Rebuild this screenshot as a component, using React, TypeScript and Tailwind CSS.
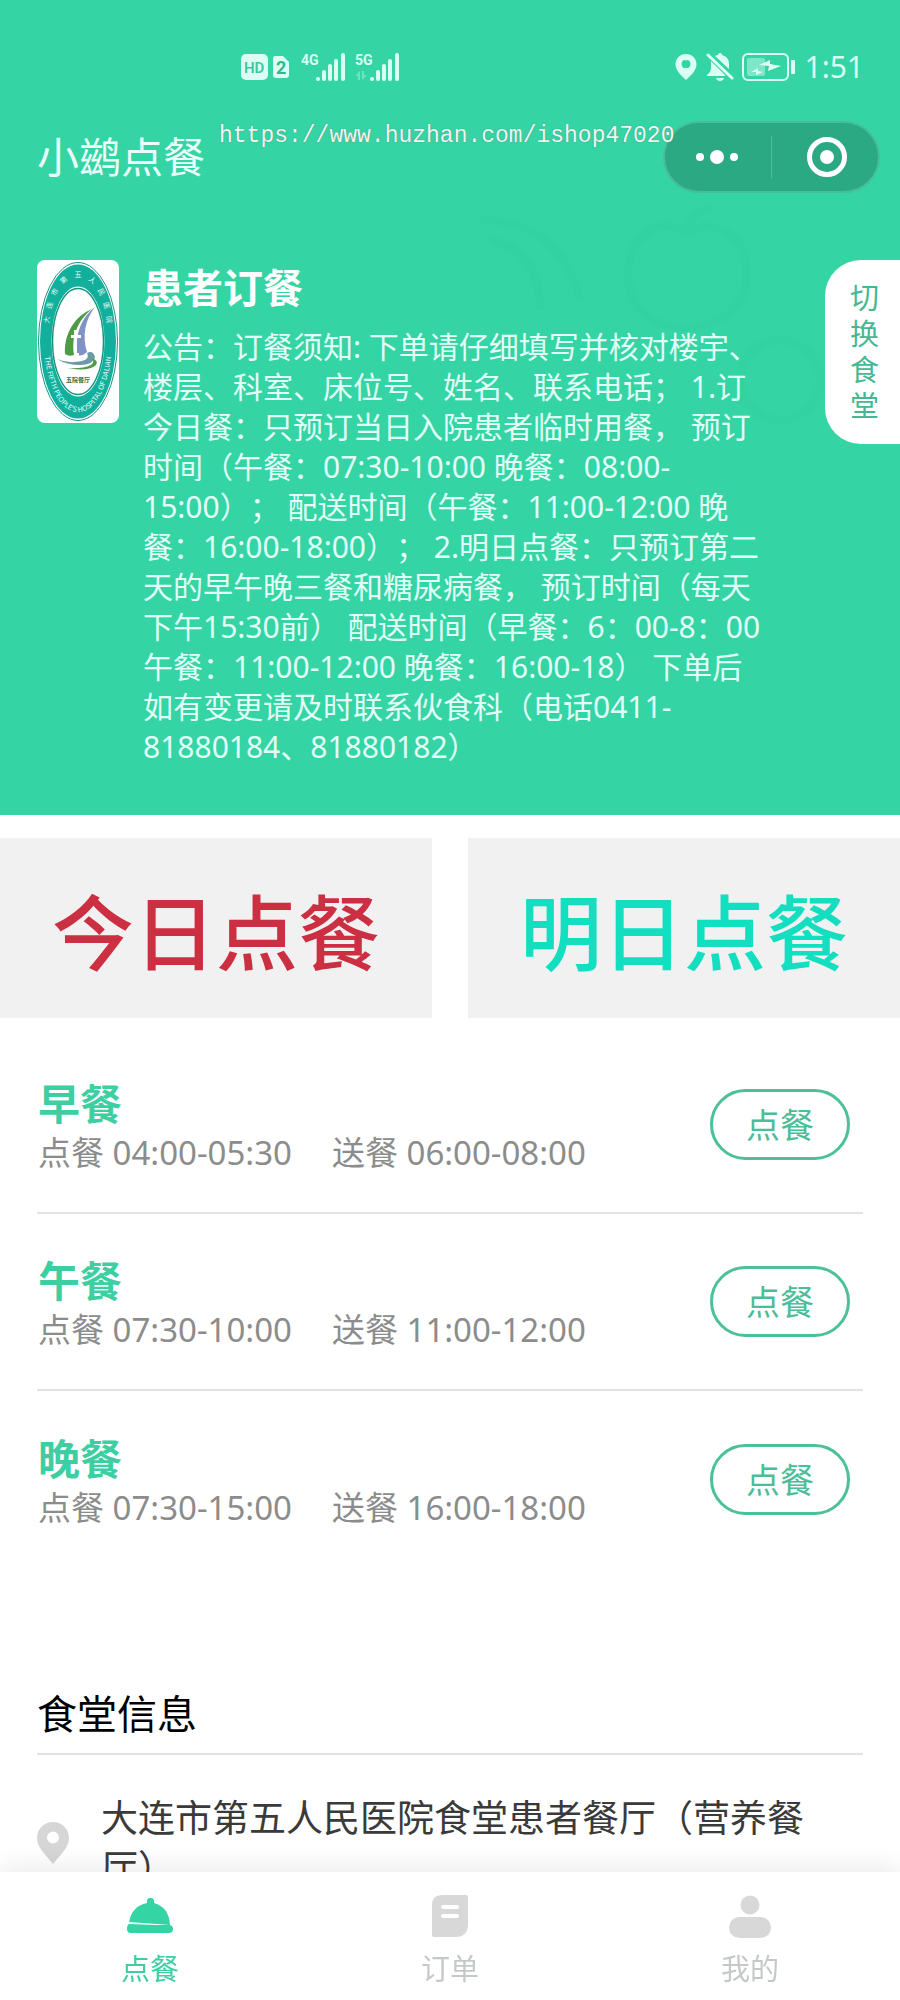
interface Meal {
  name: string;
  order: string;
  delivery: string;
}

const meals: Meal[] = [
  { name: "早餐", order: "04:00-05:30", delivery: "06:00-08:00" },
  { name: "午餐", order: "07:30-10:00", delivery: "11:00-12:00" },
  { name: "晚餐", order: "07:30-15:00", delivery: "16:00-18:00" },
];

const notice = `公告：订餐须知: 下单请仔细填写并核对楼宇、
楼层、科室、床位号、姓名、联系电话； 1.订
今日餐：只预订当日入院患者临时用餐， 预订
时间（午餐：07:30-10:00 晚餐：08:00-
15:00）； 配送时间（午餐：11:00-12:00 晚
餐：16:00-18:00）； 2.明日点餐：只预订第二
天的早午晚三餐和糖尿病餐， 预订时间（每天
下午15:30前） 配送时间（早餐：6：00-8：00
午餐：11:00-12:00 晚餐：16:00-18） 下单后
如有变更请及时联系伙食科（电话0411-
81880184、81880182）`;

const SignalIcon = ({ label }: { label: string }) => (
  <svg width="46" height="30" viewBox="0 0 46 30" fill="#dcfff4">
    <text x="0" y="13" fontSize="14" fontWeight="700" className="font-['Roboto',sans-serif]">
      {label}
    </text>
    {label === "5G" && (
      <path d="M0 24l5-5v9h-2v-4zM7 19h2v4h3l-5 5z" opacity="0.35" />
    )}
    <circle cx="17" cy="27" r="2" />
    <rect x="21" y="18" width="4" height="11" rx="2" />
    <rect x="27" y="12" width="4" height="17" rx="2" />
    <rect x="33" y="7" width="4" height="22" rx="2" />
    <rect x="40" y="1" width="4" height="28" rx="2" />
  </svg>
);

const StatusBar = () => (
  <div className="flex h-10 items-center justify-between pl-[241px] pr-[36px]">
    <div className="flex items-center">
      <svg width="48" height="28" viewBox="0 0 48 28">
        <rect x="0" y="1" width="27" height="26" rx="5" fill="#dcfff4" />
        <text x="3" y="20" fontSize="15" fontWeight="600" fill="#3fc79f" className="font-['Roboto',sans-serif]">
          HD
        </text>
        <path d="M34 3h8l6 6v13q0 3-3 3H35q-3 0-3-3V6q0-3 2-3z" fill="#dcfff4" />
        <text x="35" y="21" fontSize="18" fontWeight="700" fill="#2fb78e" className="font-['Roboto',sans-serif]">
          2
        </text>
      </svg>
      <div className="ml-3 flex gap-2">
        <SignalIcon label="4G" />
        <SignalIcon label="5G" />
      </div>
    </div>

    <div className="flex items-center gap-2 text-[30px] leading-10 text-[#dcfff4]">
      <svg width="24" height="28" viewBox="0 0 24 28" fill="currentColor">
        <path
          fillRule="evenodd"
          d="M12 1C6 1 1.500 5.500 1.500 11.500C1.500 18 8 23 12 27C16 23 22.500 18 22.500 11.500C22.500 5.500 18 1 12 1zM12 7.500a3 4 0 1 1 0 7a3 4 0 1 1 0-7z"
        />
      </svg>
      <svg width="28" height="30" viewBox="0 0 28 30" fill="currentColor">
        <path d="M9 4q2-1 3-1q0-2 2-2t2 2q7 2 7 9v5L9 4zM5 9l15 15H1q0-2 1-2q3-2 3-7z" />
        <path d="M10 26h8q-1 3-4 3t-4-3z" />
        <path d="M2 3l24 23" stroke="currentColor" strokeWidth="3" strokeLinecap="round" />
      </svg>
      <svg width="54" height="28" viewBox="0 0 54 28" fill="currentColor">
        <rect x="1" y="1" width="45" height="26" rx="5" fill="none" stroke="currentColor" strokeWidth="2" />
        <rect x="5" y="5" width="18" height="18" rx="2" opacity="0.45" />
        <path d="M17 12l11-5v4l11 2l-13 5l1-5zM9 19l7-4v3l5 1l-7 3v-3z" />
        <rect x="49" y="7" width="4" height="14" rx="1" />
      </svg>
      <span>1:51</span>
    </div>
  </div>
);

const Capsule = () => (
  <div className="flex h-[72px] w-[217px] items-center rounded-full border-2 border-[#48bd99] bg-[#2aa982]">
    <button aria-label="更多" className="flex h-full flex-1 items-center justify-center">
      <svg width="44" height="16" viewBox="0 0 44 16" fill="#fff">
        <circle cx="4" cy="8" r="4" />
        <circle cx="21" cy="8" r="7" />
        <circle cx="38" cy="8" r="4" />
      </svg>
    </button>
    <span className="h-[42px] w-px bg-[#4bbf9b]" />
    <button aria-label="关闭" className="flex h-full flex-1 items-center justify-center">
      <svg width="44" height="42" viewBox="0 0 44 42" fill="none">
        <circle cx="24" cy="21" r="17.500" stroke="#fff" strokeWidth="5" />
        <circle cx="24" cy="21" r="7" fill="#fff" />
      </svg>
    </button>
  </div>
);

const HospitalLogo = () => (
  <svg
    width="82"
    height="163"
    viewBox="0 0 82 163"
    className="h-[163px] w-[82px] shrink-0 rounded-lg bg-white"
  >
    <ellipse cx="41" cy="81.500" rx="39.500" ry="79" fill="#fff" stroke="#16967f" strokeWidth="1" />
    <ellipse cx="41" cy="81.500" rx="38" ry="77" fill="#12b09c" />
    <ellipse cx="41" cy="81.500" rx="26.500" ry="55" fill="#fff" />
    <ellipse cx="41" cy="81.500" rx="25.500" ry="53" fill="#fff" stroke="#16967f" strokeWidth="1.500" />
    <path id="ring-top" d="M11 72C13 37 25 17 41 17C57 17 69 37 71 72" fill="none" />
    <path id="ring-bottom" d="M6 78C8 121 21 152 41 152C61 152 74 121 76 78" fill="none" />
    <g className="font-['Noto_Sans_CJK_SC',sans-serif]" fill="#e9fffb">
      <text fontSize="7">
        <textPath href="#ring-top" startOffset="50%" textAnchor="middle">
          大　连　市　第　五　人　民　医　院
        </textPath>
      </text>
      <text fontSize="7">
        <textPath href="#ring-bottom" startOffset="50%" textAnchor="middle">
          THE FIFTH PEOPLE'S HOSPITAL OF DALIAN
        </textPath>
      </text>
    </g>
    <path d="M55 49C38 56 27 73 28 94Q32 97 37 95C34 76 41 60 55 49z" fill="#4f9a45" />
    <path d="M58 47C44 58 38 73 40 95Q45 97 50 92C45 76 48 60 58 47z" fill="#7f93c4" />
    <path d="M37 70h3v5h4v3h-4v15h2v3q-5 1-5-4V78h-3v-3h3z" fill="#fff" />
    <path d="M20 99Q31 104 45 101Q53 99 50 93Q56 90 58 97Q57 104 44 105Q29 105 20 99z" fill="#6c9aa8" />
    <path d="M29 108Q46 109 54 105Q58 102 55 98Q62 101 59 105Q52 112 29 108z" fill="#4f9a45" />
    <text
      x="41"
      y="122"
      fontSize="6"
      fontWeight="700"
      textAnchor="middle"
      fill="#3f6e2a"
      className="font-['Noto_Sans_CJK_SC',sans-serif]"
    >
      五院餐厅
    </text>
  </svg>
);

const Header = () => (
  <header className="relative bg-[#34d4a4] pb-12 pt-[47px]">
    {/* faint fruit pattern behind the notice */}
    <svg
      className="pointer-events-none absolute right-0 top-[200px]"
      width="520"
      height="240"
      viewBox="0 0 520 240"
      fill="none"
      stroke="#2fcb9b"
      strokeWidth="8"
      opacity="0.15"
    >
      <path d="M100 20Q180 20 200 100M110 40Q160 50 160 110" />
      <path d="M307 32C270 10 240 50 250 90C260 140 350 140 365 90C375 40 340 15 307 32zM307 30q5-20 25-22" />
      <circle cx="400" cy="180" r="40" />
    </svg>

    <div className="relative">
      <StatusBar />

      <div className="mt-[34px] flex h-[72px] items-center justify-between pl-[37px] pr-[20px]">
        <h1 className="text-[42px] leading-[60px] text-[#eafff9]">小鹚点餐</h1>
        <Capsule />
      </div>

      <div className="mt-[67px] flex items-start pl-[37px]">
        <HospitalLogo />
        <div className="ml-6 flex-1">
          <h2 className="text-[40px] font-bold leading-[56px] text-white">患者订餐</h2>
          <p className="mt-[11px] whitespace-pre-line text-[30px] leading-10 text-[#e2fff7] [text-spacing-trim:space-all]">
            {notice}
          </p>
        </div>
        <button className="flex w-[75px] flex-col items-center rounded-l-[36px] bg-white py-[20px] pl-1 text-[29px] leading-9 text-[#45b893]">
          <span className="w-[29px] break-all">切换食堂</span>
        </button>
      </div>
    </div>

    <span className="absolute left-[219px] top-[121px] font-['Liberation_Mono',monospace] text-[23px] leading-[30px] text-[#eef7f4] [text-shadow:0_0_1px_#55776c]">
      https://www.huzhan.com/ishop47020
    </span>
  </header>
);

const MealRow = ({ meal }: { meal: Meal }) => (
  <li className="flex h-[177px] items-center justify-between border-b-2 border-[#e3e3e3] pr-[13px] last:border-b-0">
    <div className="pl-px pt-0.5">
      <h3 className="text-[42px] font-bold leading-[54px] text-[#3dcfa2]">{meal.name}</h3>
      <p className="flex gap-10 text-[33px] leading-[44px] text-[#8c8c8c]">
        <span>点餐 {meal.order}</span>
        <span>送餐 {meal.delivery}</span>
      </p>
    </div>
    <button className="h-[71px] w-[140px] rounded-full border-3 border-[#4bc09b] text-[34px] leading-[48px] text-[#4bbd98]">
      点餐
    </button>
  </li>
);

const PinIcon = () => (
  <svg width="32" height="42" viewBox="0 0 32 42" fill="#d6d6d6" className="shrink-0">
    <path
      fillRule="evenodd"
      d="M16 0C7 0 0 7 0 16C0 26 10 34 16 42C22 34 32 26 32 16C32 7 25 0 16 0zM16 9.500a6 6 0 1 1 0 12a6 6 0 1 1 0-12z"
    />
  </svg>
);

const DishIcon = () => (
  <svg width="48" height="44" viewBox="0 0 48 44" fill="#34d4a4">
    <path d="M21 9Q20 4 24.500 4Q29 4 28 9Q43 13 44 31L3 28Q6 12 21 9z" />
    <path d="M3 30L30 31H43Q47 31 47 35Q47 39 43 39H5Q1 39 1 35Q1 31 3 30z" />
  </svg>
);

const OrderIcon = () => (
  <svg width="48" height="44" viewBox="0 0 48 44" fill="#d8d8d8">
    <path d="M16 1H40Q42 1 42 3V30Q42 43 29 43H8Q6 43 6 41V11Q6 1 16 1z" />
    <path d="M17 13h14M17 22h14" stroke="#fff" strokeWidth="4" strokeLinecap="round" />
  </svg>
);

const UserIcon = () => (
  <svg width="48" height="44" viewBox="0 0 48 44" fill="#d8d8d8">
    <circle cx="24" cy="11" r="9.500" />
    <rect x="3" y="23" width="42" height="21" rx="10.500" />
  </svg>
);

const TabBar = () => (
  <nav className="fixed inset-x-0 bottom-0 grid h-32 grid-cols-3 bg-white text-[29px] leading-10 text-[#c5c8c8] shadow-[0_-4px_24px_rgba(0,0,0,0.09)]">
    <a href="#order" className="flex flex-col items-center pt-[22px] text-[#3dcfa2]">
      <DishIcon />
      <span className="mt-[11px]">点餐</span>
    </a>
    <a href="#orders" className="flex flex-col items-center pt-[22px]">
      <OrderIcon />
      <span className="mt-[11px]">订单</span>
    </a>
    <a href="#mine" className="flex flex-col items-center pt-[22px]">
      <UserIcon />
      <span className="mt-[11px]">我的</span>
    </a>
  </nav>
);

export default function App() {
  return (
    <div className="min-h-screen bg-white font-['Noto_Sans','Noto_Sans_CJK_SC',sans-serif]">
      <Header />

      <div className="mt-[23px] grid grid-cols-2 gap-9 text-[82px] font-medium leading-[110px]">
        <button className="h-[180px] bg-[#f1f1f1] pt-2 text-[#cc2f42]">今日点餐</button>
        <button className="h-[180px] bg-[#f1f1f1] pt-2 text-[#13dfc0]">明日点餐</button>
      </div>

      <main className="px-[37px]">
        <ul className="mt-[19px]">
          {meals.map((meal) => (
            <MealRow key={meal.name} meal={meal} />
          ))}
        </ul>

        <section className="mt-[119px]">
          <h2 className="border-b-2 border-[#e3e3e3] pb-3 text-[40px] leading-[54px] text-black">
            食堂信息
          </h2>
          <div className="mt-[38px] flex items-center gap-8 pr-10">
            <PinIcon />
            <p className="text-[37px] leading-[50px] text-[#3a3a3a]">
              大连市第五人民医院食堂患者餐厅（营养餐厅）
            </p>
          </div>
        </section>
      </main>

      <TabBar />
    </div>
  );
}
